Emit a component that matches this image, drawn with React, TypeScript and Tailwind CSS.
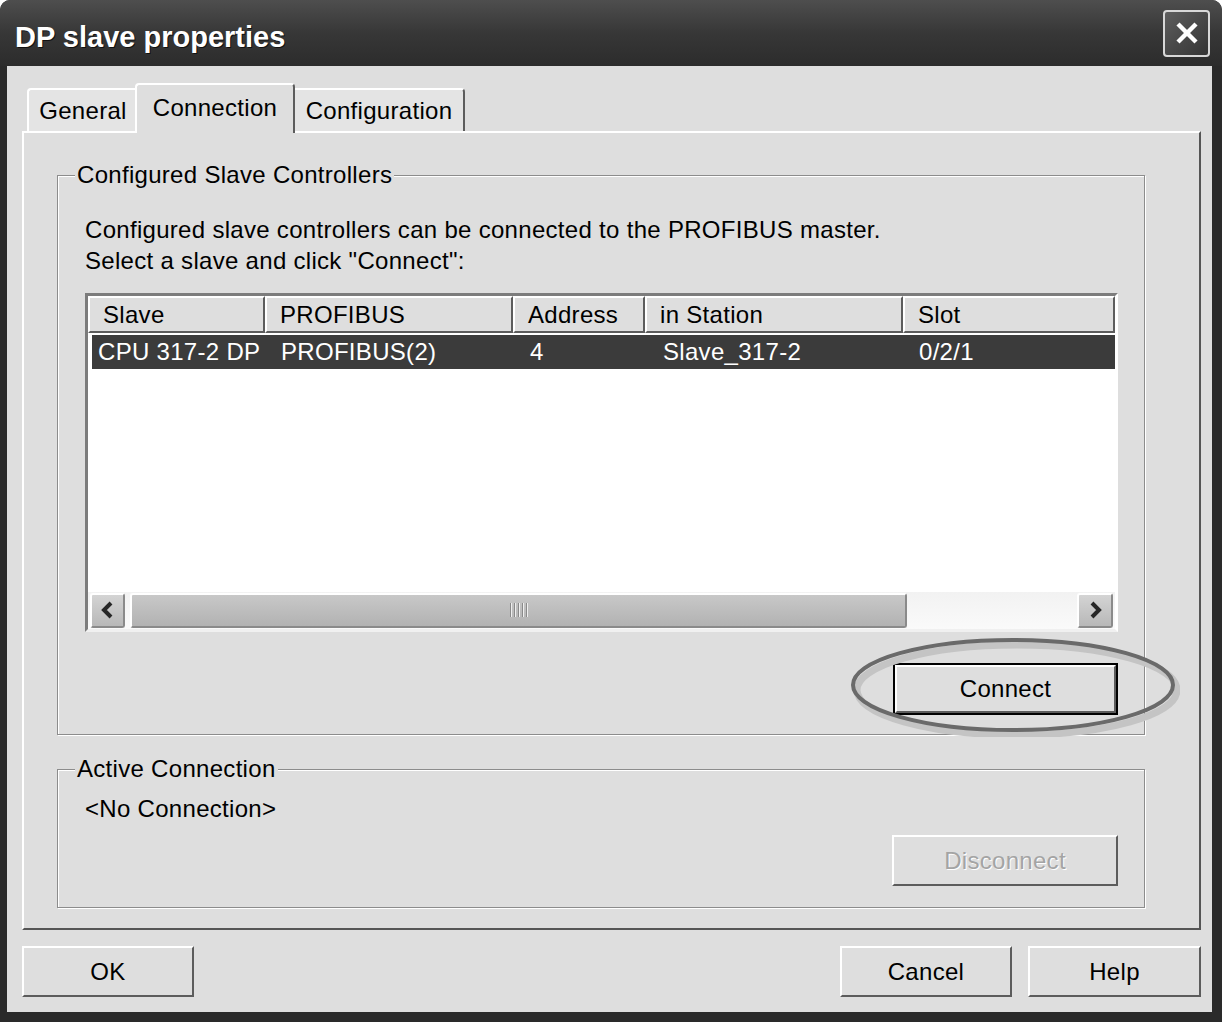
import React from 'react';

const columns = [
  { key: 'slave', label: 'Slave', width: 'w-[177px]' },
  { key: 'profibus', label: 'PROFIBUS', width: 'w-[248px]' },
  { key: 'address', label: 'Address', width: 'w-[132px]' },
  { key: 'station', label: 'in Station', width: 'w-[258px]' },
  { key: 'slot', label: 'Slot', width: 'flex-1' },
];

const rows = [
  { slave: 'CPU 317-2 DP', profibus: 'PROFIBUS(2)', address: '4', station: 'Slave_317-2', slot: '0/2/1' },
];

const raised =
  'border-2 border-t-white border-l-white border-r-[#5c5c5c] border-b-[#5c5c5c] bg-[#dedede]';

const Chevron: React.FC<{ dir: 'left' | 'right' }> = ({ dir }) => (
  <svg width="16" height="20" viewBox="0 0 16 20">
    <polyline
      points={dir === 'left' ? '11,3 4,10 11,17' : '5,3 12,10 5,17'}
      fill="none"
      stroke="#262626"
      strokeWidth="4"
    />
  </svg>
);

const GroupBox: React.FC<{ title: string; className?: string; children: React.ReactNode }> = ({ title, className, children }) => (
  <fieldset
    className={`border border-[#8c8c8c] shadow-[inset_1px_1px_0_#fff,1px_1px_0_#fff] ${className ?? ''}`}
  >
    <legend className="ml-[17px] px-[2px] bg-[#dedede] leading-[28px]">{title}</legend>
    {children}
  </fieldset>
);

export default function App() {
  return (
    <div className="w-[1222px] h-[1022px] bg-[#2a2a2a] rounded-t-[10px] flex flex-col overflow-hidden font-['Liberation_Sans',Arial,sans-serif] text-black">
      {/* Title bar */}
      <div className="h-[66px] shrink-0 flex items-center justify-between pl-[15px] pr-[12px] bg-gradient-to-b from-[#4e4e4e] via-[#373737] to-[#2c2c2c]">
        <h1 className="text-[29px] font-bold text-white [text-shadow:1px_1px_0_#111] mt-[10px]">
          DP slave properties
        </h1>
        <button className="w-[47px] h-[47px] rounded-[4px] border-2 border-[#d8d8d8] bg-gradient-to-br from-[#5e5e5e] to-[#353535] flex items-center justify-center">
          <svg width="30" height="30" viewBox="0 0 30 30">
            <line x1="6" y1="6" x2="24" y2="24" stroke="#fff" strokeWidth="4.5" />
            <line x1="24" y1="6" x2="6" y2="24" stroke="#fff" strokeWidth="4.5" />
          </svg>
        </button>
      </div>

      {/* Dialog body */}
      <div className="flex-1 ml-[7px] mr-[10px] mb-[10px] bg-[#dedede] flex flex-col pl-[15px] pr-[11px] pt-[17px] text-[24px] tracking-[0.3px]">
        {/* Tabs */}
        <div className="h-[48px] flex items-end relative z-10">
          <div className="ml-[5px] w-[110px] h-[43px] border-t-2 border-l-2 border-white rounded-tl-[4px] bg-[#e4e4e4] flex items-center justify-center">
            General
          </div>
          <div className="-ml-[2px] w-[160px] h-[50px] -mb-[2px] border-t-2 border-l-2 border-r-2 border-t-white border-l-white border-r-[#5c5c5c] rounded-t-[4px] bg-[#dedede] flex items-start justify-center pt-[5px]">
            Connection
          </div>
          <div className="w-[170px] h-[43px] border-t-2 border-r-2 border-t-white border-r-[#5c5c5c] rounded-tr-[4px] bg-[#e4e4e4] flex items-center justify-center">
            Configuration
          </div>
        </div>

        {/* Tab panel */}
        <div className="flex-1 border-2 border-t-white border-l-white border-r-[#555] border-b-[#555] pl-[33px] pr-[54px] pt-[28px]">
          <GroupBox title="Configured Slave Controllers">
            <div className="pl-[27px] pr-[26px] pt-[25px] pb-[19px]">
              <p className="leading-[31px]">
                Configured slave controllers can be connected to the PROFIBUS master.
                <br />
                Select a slave and click "Connect":
              </p>

              {/* Slave list */}
              <div className="mt-[17px] h-[339px] border-[3px] border-t-[#7c7c7c] border-l-[#7c7c7c] border-r-white border-b-[#f0f0f0] bg-white flex flex-col">
                <div className="h-[37px] flex">
                  {columns.map((c) => (
                    <div
                      key={c.key}
                      className={`${c.width} h-full ${raised} flex items-center pl-[13px] whitespace-nowrap`}
                    >
                      {c.label}
                    </div>
                  ))}
                </div>
                {rows.map((r, i) => (
                  <div key={i} className="mt-[2px] ml-[4px] h-[34px] bg-[#3b3b3b] text-white flex items-center whitespace-nowrap">
                    <div className="w-[173px] pl-[6px]">{r.slave}</div>
                    <div className="w-[248px] pl-[16px]">{r.profibus}</div>
                    <div className="w-[132px] pl-[17px]">{r.address}</div>
                    <div className="w-[258px] pl-[18px]">{r.station}</div>
                    <div className="flex-1 pl-[16px]">{r.slot}</div>
                  </div>
                ))}
                <div className="flex-1" />

                {/* Horizontal scrollbar */}
                <div className="h-[37px] flex items-center px-[2px] pb-[1px] bg-gradient-to-b from-[#f2f2f2] to-[#fafafa]">
                  <div className="w-[35px] h-[35px] rounded-[3px] border-2 border-t-white border-l-white border-r-[#8a8a8a] border-b-[#8a8a8a] bg-gradient-to-b from-[#d4d4d4] to-[#b8b8b8] flex items-center justify-center">
                    <Chevron dir="left" />
                  </div>
                  <div className="ml-[5px] w-[777px] h-[35px] rounded-[3px] border-2 border-t-white border-l-white border-r-[#8a8a8a] border-b-[#8a8a8a] bg-gradient-to-b from-[#c8c8c8] to-[#b2b2b2] flex items-center justify-center gap-[3px]">
                    {[0, 1, 2, 3, 4].map((g) => (
                      <span key={g} className="w-[1px] h-[14px] bg-[#8a8a8a] shadow-[1px_0_0_#eee]" />
                    ))}
                  </div>
                  <div className="flex-1" />
                  <div className="w-[36px] h-[35px] rounded-[3px] border-2 border-t-white border-l-white border-r-[#8a8a8a] border-b-[#8a8a8a] bg-gradient-to-b from-[#d4d4d4] to-[#b8b8b8] flex items-center justify-center">
                    <Chevron dir="right" />
                  </div>
                </div>
              </div>

              <div className="mt-[31px] flex justify-end">
                <div className="relative">
                  <button className="w-[225px] h-[52px] border-2 border-black flex">
                    <span className={`flex-1 ${raised} flex items-center justify-center`}>Connect</span>
                  </button>
                  {/* Highlight ring drawn over the screenshot */}
                  <svg
                    className="absolute left-[-43px] top-[-26px] pointer-events-none"
                    width="330"
                    height="100"
                    viewBox="0 0 330 100"
                  >
                    <ellipse cx="165" cy="50" rx="160" ry="45" fill="none" stroke="#c4c4c4" strokeWidth="7" transform="translate(2 3)" />
                    <ellipse cx="163" cy="48" rx="160" ry="45" fill="none" stroke="#6a6a6a" strokeWidth="4" />
                  </svg>
                </div>
              </div>
            </div>
          </GroupBox>

          <GroupBox title="Active Connection" className="mt-[20px]">
            <div className="pl-[27px] pr-[26px] pt-[10px] pb-[21px]">
              <div className="leading-[31px]">&lt;No Connection&gt;</div>
              <div className="mt-[11px] flex justify-end">
                <button className={`w-[226px] h-[51px] ${raised} text-[#a4a4a4] [text-shadow:1px_1px_0_#fff]`}>
                  Disconnect
                </button>
              </div>
            </div>
          </GroupBox>
        </div>

        {/* Dialog buttons */}
        <div className="mt-[16px] mb-[15px] flex justify-between">
          <button className={`w-[172px] h-[51px] ${raised}`}>OK</button>
          <div className="flex gap-[16px]">
            <button className={`w-[172px] h-[51px] ${raised}`}>Cancel</button>
            <button className={`w-[173px] h-[51px] ${raised}`}>Help</button>
          </div>
        </div>
      </div>
    </div>
  );
}
